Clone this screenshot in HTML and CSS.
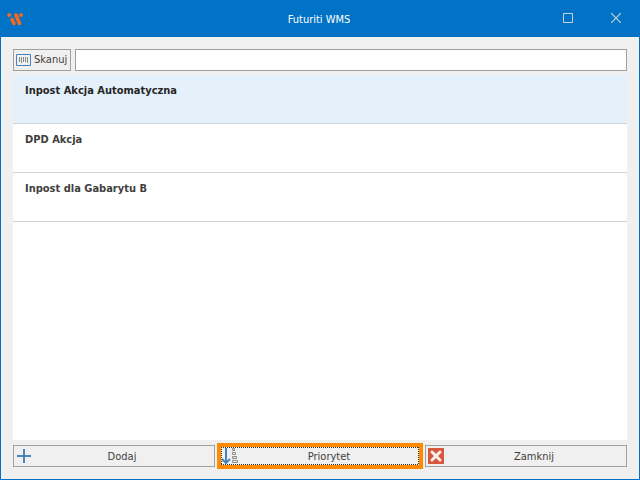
FILE: index.html
```
<!DOCTYPE html>
<html lang="pl">
<head>
    <meta charset="utf-8">
    <title>Futuriti WMS</title>
    <link rel="stylesheet" href="styles.css">
</head>
<body>
    <header class="titlebar">
        <svg class="logo" width="17" height="16" viewBox="0 0 17 16" aria-hidden="true">
            <g fill="none" stroke="#f26a21" stroke-linecap="round">
                <path d="M5 8.500L7 12.500M9 4L12.500 12.500" stroke-width="3.600"/>
            </g>
            <circle cx="2.200" cy="4" r="2" fill="#f26a21"/>
            <circle cx="14" cy="4" r="2" fill="#f26a21"/>
        </svg>
        <h1 class="title">Futuriti WMS</h1>
        <div class="window-buttons">
            <button class="window-btn" type="button" aria-label="Maksymalizuj">
                <svg width="10" height="10" viewBox="0 0 10 10"><path d="M.5 .5h9v9h-9z" fill="none" stroke="#ccd2d8"/></svg>
            </button>
            <button class="window-btn" type="button" aria-label="Zamknij okno">
                <svg width="10" height="10" viewBox="0 0 10 10"><path d="M0 0L10 10M10 0L0 10" stroke="#ccd2d8" stroke-width="1.200"/></svg>
            </button>
        </div>
    </header>

    <main class="content">
        <form class="scan-bar">
            <button class="btn scan-btn" type="button">
                <svg width="15" height="12" viewBox="0 0 15 12" aria-hidden="true">
                    <path d="M.5 .5h14v11h-14z" fill="none" stroke="#4682bd"/>
                    <path d="M3.500 3v5M5.500 3v6M7.500 3v5M9.500 3v5M11.500 3v6" stroke="#888"/>
                </svg>
                Skanuj
            </button>
            <input class="scan-input" type="text" aria-label="Skanuj">
        </form>

        <ul class="list">
            <li class="item selected">Inpost Akcja Automatyczna</li>
            <li class="item">DPD Akcja</li>
            <li class="item">Inpost dla Gabarytu B</li>
        </ul>

        <div class="toolbar">
            <button class="btn" type="button">
                <svg class="icon" width="16" height="16" viewBox="0 0 16 16" aria-hidden="true">
                    <path d="M8 1v14M1 8h14" stroke="#4682bd" stroke-width="2"/>
                </svg>
                <span>Dodaj</span>
            </button>
            <button class="btn highlighted" type="button">
                <svg class="icon" width="18" height="16" viewBox="0 0 18 16" aria-hidden="true">
                    <path d="M5 0v14M1 11l4 4 4-4" fill="none" stroke="#4682bd" stroke-width="2"/>
                    <path d="M11.500 .5h2v2h-2zM11.500 4.500h3v2h-3zM11.500 8.500h4v2h-4zM11.500 12.500h5v2h-5z" fill="none" stroke="#8a8a8a"/>
                </svg>
                <span>Priorytet</span>
            </button>
            <button class="btn" type="button">
                <svg class="icon" width="16" height="16" viewBox="0 0 16 16" aria-hidden="true">
                    <path d="M0 0h16v16H0z" fill="#d9583b"/>
                    <path d="M4 4l8 8M12 4l-8 8" stroke="#f4f0ee" stroke-width="3" stroke-linecap="round"/>
                </svg>
                <span>Zamknij</span>
            </button>
        </div>
    </main>
</body>
</html>
```
FILE: styles.css
```
:root {
    --blue: #0173c7;
    --bg: #f0f0f0;
    --border: #a0a0a0;
    --orange: #ff8c00;
    --font: Tahoma, "DejaVu Sans Condensed", "DejaVu Sans", sans-serif;
}

* {
    box-sizing: border-box;
    margin: 0;
    padding: 0;
}

body {
    display: flex;
    flex-direction: column;
    min-height: 100vh;
    border: 1px solid var(--blue);
    border-top: 0;
    background-color: var(--bg);
    color: #404040;
    font-family: var(--font);
    font-size: 11px;
    line-height: 14px;
}

button, input {
    font: inherit;
    color: inherit;
}

.titlebar {
    display: grid;
    grid-template-columns: 1fr auto 1fr;
    align-items: center;
    height: 37px;
    padding-left: 6px;
    background-color: var(--blue);
    color: #fff;
}

.title {
    padding: 2px 8px 0 0;
    font-size: 11px;
    font-weight: normal;
}

.window-buttons {
    display: flex;
    align-self: start;
    justify-self: end;
}

.window-btn {
    display: flex;
    align-items: center;
    justify-content: center;
    width: 48px;
    height: 36px;
    padding-left: 2px;
    border: 0;
    background: none;
}

.content {
    display: flex;
    flex: 1;
    flex-direction: column;
    padding: 12px;
}

.scan-bar {
    display: flex;
    gap: 4px;
    margin-bottom: 4px;
}

.btn {
    display: flex;
    align-items: center;
    height: 22px;
    padding: 0 2px;
    border: 1px solid var(--border);
    background-color: var(--bg);
}

.scan-btn {
    gap: 3px;
    width: 58px;
}

.scan-input {
    flex: 1;
    min-width: 0;
    height: 22px;
    padding: 0 4px;
    border: 1px solid var(--border);
    background-color: #fff;
}

.list {
    flex: 1;
    margin-bottom: 5px;
    background-color: #fff;
    list-style: none;
}

.item {
    height: 49px;
    padding: 9px 12px;
    border-bottom: 1px solid #d2d2d2;
    font-weight: bold;
}

.item.selected {
    background-color: #e5f1fa;
    color: #262626;
}

.toolbar {
    display: grid;
    grid-template-columns: repeat(3, 1fr);
    gap: 4px;
}

.toolbar span {
    flex: 1;
    padding-top: 1px;
    text-align: center;
}

.highlighted {
    padding: 0;
    border: 2px solid var(--orange);
    outline: 2px solid var(--orange);
    background-image:
        repeating-linear-gradient(90deg, #333 0 1px, transparent 1px 2px),
        repeating-linear-gradient(90deg, #333 0 1px, transparent 1px 2px),
        repeating-linear-gradient(#333 0 1px, transparent 1px 2px),
        repeating-linear-gradient(#333 0 1px, transparent 1px 2px);
    background-position: top, bottom, left, right;
    background-repeat: no-repeat;
    background-size: 100% 1px, 100% 1px, 1px 100%, 1px 100%;
}
```
